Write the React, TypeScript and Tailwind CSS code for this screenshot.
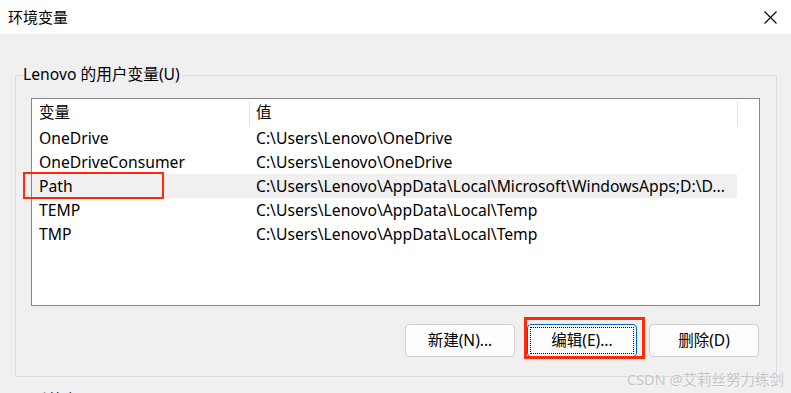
const font = "font-['Noto_Sans','Noto_Sans_CJK_SC',sans-serif]";

const rows = [
  { name: "OneDrive", value: "C:\\Users\\Lenovo\\OneDrive" },
  { name: "OneDriveConsumer", value: "C:\\Users\\Lenovo\\OneDrive" },
  {
    name: "Path",
    value: "C:\\Users\\Lenovo\\AppData\\Local\\Microsoft\\WindowsApps;D:\\D...",
    selected: true,
  },
  { name: "TEMP", value: "C:\\Users\\Lenovo\\AppData\\Local\\Temp" },
  { name: "TMP", value: "C:\\Users\\Lenovo\\AppData\\Local\\Temp" },
];

const CloseIcon = () => (
  <svg width="13" height="13" viewBox="0 0 13 13" className="text-black">
    <path d="M0.5 0.5 L12.5 12.5 M12.5 0.5 L0.5 12.5" stroke="currentColor" strokeWidth="1.1" fill="none" />
  </svg>
);

const Button = ({ label, focused }: { label: string; focused?: boolean }) => (
  <div
    className={
      "relative flex h-[33px] w-[110px] items-center justify-center rounded-[4px] bg-[#fdfdfd] text-[15.5px] text-black " +
      (focused ? "border border-[#0067c0]" : "border border-[#d0d0d0]")
    }
  >
    {focused && (
      <div className="absolute inset-[2px] border border-dotted border-black" />
    )}
    {label}
  </div>
);

export default function App() {
  return (
    <div className={`relative h-[393px] w-[791px] overflow-hidden bg-[#f0f0f0] ${font}`}>
      {/* title bar */}
      <div className="flex h-[34px] items-center justify-between bg-white pl-[8px] pr-[14px]">
        <span className="text-[15px] text-black">环境变量</span>
        <CloseIcon />
      </div>

      {/* 用户变量 group */}
      <div className="relative ml-[15px] mt-[41px] h-[302px] w-[762px] border border-[#dcdcdc]">
        <span className="absolute left-[7px] top-[-12px] bg-[#f0f0f0] pr-[2px] text-[15.7px] leading-[20px] text-black">
          Lenovo 的用户变量(U)
        </span>

        <div className="pl-[15px] pt-[22px]">
          <div className="h-[208px] w-[729px] border border-[#828790] bg-white">
            <div className="flex h-[27px] items-center pt-[1px] text-[15.5px] text-black">
              <div className="w-[217px] pl-[7px]">变量</div>
              <div className="h-[25px] w-px bg-[#e5e5e5]" />
              <div className="w-[487px] pl-[6px]">值</div>
              <div className="h-[25px] w-px bg-[#e5e5e5]" />
            </div>
            {rows.map((r) => (
              <div
                key={r.name}
                className={
                  "flex h-[24px] w-[705px] items-center pt-[1px] text-[15.7px] text-black " +
                  (r.selected ? "bg-[#f0f0f0]" : "")
                }
              >
                <div className="w-[218px] pl-[7px]">{r.name}</div>
                <div className="w-[487px] overflow-hidden whitespace-nowrap pl-[6px]">{r.value}</div>
              </div>
            ))}
          </div>

          <div className="mt-[18px] flex w-[728px] justify-end gap-[12px]">
            <Button label="新建(N)..." />
            <Button label="编辑(E)..." focused />
            <Button label="删除(D)" />
          </div>
        </div>
      </div>

      {/* 系统变量 group, cut off by the window */}
      <div className="relative ml-[15px] mt-[23px] h-[100px] w-[762px] border border-[#dcdcdc]">
        <span className="absolute left-[16px] top-[-12px] bg-[#f0f0f0] px-[1px] text-[15px] leading-[20px] text-black">
          系统变量(S)
        </span>
      </div>

      {/* annotation boxes */}
      <div className="absolute left-[23px] top-[172px] h-[27px] w-[141px] border-2 border-[#ff2a0a]" />
      <div className="absolute left-[524px] top-[317px] h-[42px] w-[121px] border-[3px] border-[#ff2a0a]" />

      {/* watermark */}
      <span className="absolute left-[627px] top-[368px] whitespace-nowrap text-[14.5px] leading-[22px] text-[#c4c4c4] [text-shadow:0_0_2px_#ffffff]">
        CSDN @艾莉丝努力练剑
      </span>
    </div>
  );
}
